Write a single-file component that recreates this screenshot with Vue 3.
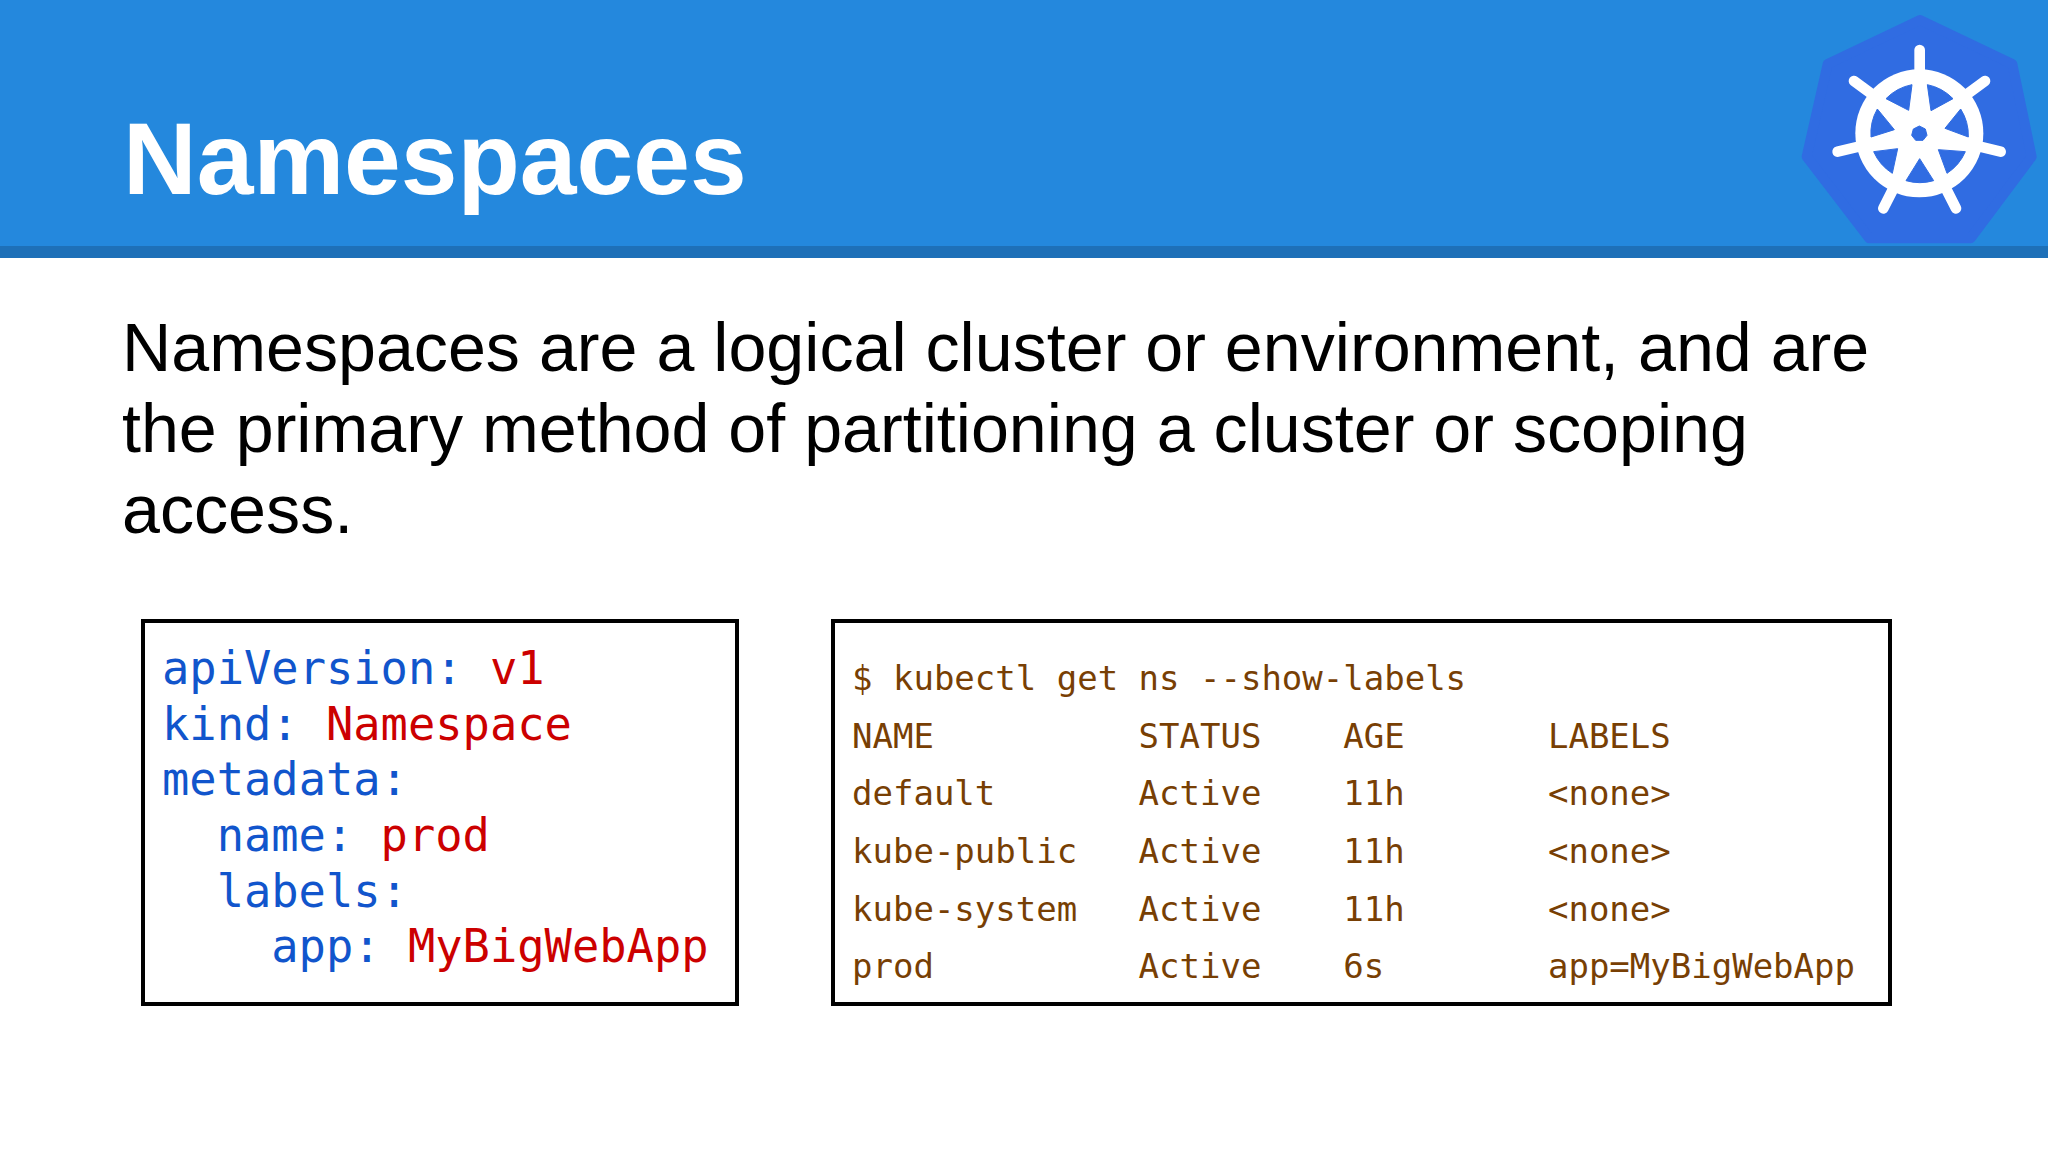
<script setup>
const yaml = [
  { indent: 0, key: 'apiVersion:', value: 'v1' },
  { indent: 0, key: 'kind:', value: 'Namespace' },
  { indent: 0, key: 'metadata:', value: '' },
  { indent: 2, key: 'name:', value: 'prod' },
  { indent: 2, key: 'labels:', value: '' },
  { indent: 4, key: 'app:', value: 'MyBigWebApp' },
]
const rows = [
  ['NAME', 'STATUS', 'AGE', 'LABELS'],
  ['default', 'Active', '11h', '<none>'],
  ['kube-public', 'Active', '11h', '<none>'],
  ['kube-system', 'Active', '11h', '<none>'],
  ['prod', 'Active', '6s', 'app=MyBigWebApp'],
]
const spokes = [
  [479, 150, 479, 215],
  [675, 243, 625, 280],
  [722, 455, 660, 440],
  [588, 625, 560, 570],
  [370, 625, 398, 570],
  [233, 455, 296, 440],
  [282, 243, 332, 280],
]
const windows = [
  'M378 296A148 148 0 0 1 456 254L446 331Z',
  'M502 254A148 148 0 0 1 579 296L513 332Z',
  'M602 327A148 148 0 0 1 625 411L555 385Z',
  'M616 455A148 148 0 0 1 561 520L535 449Z',
  'M521 542A148 148 0 0 1 438 542L479 476Z',
  'M397 520A148 148 0 0 1 341 455L413 446Z',
  'M333 411A148 148 0 0 1 352 327L403 389Z',
]
</script>

<template>
  <div class="slide">
    <header class="banner">
      <h1 class="title">Namespaces</h1>
      <svg class="logo" viewBox="0 0 864 810" aria-hidden="true">
        <polygon class="hept" points="480,60 757,192 815,470 632,715 328,715 140,470 203,192" />
        <circle class="white" cx="478" cy="400" r="192" />
        <line v-for="(s, i) in spokes" :key="i" class="spoke" :x1="s[0]" :y1="s[1]" :x2="s[2]" :y2="s[3]" />
        <path v-for="(d, i) in windows" :key="'w' + i" class="window" :d="d" />
        <polygon class="hub" points="478,378 496,387 501,406 489,421 467,421 455,406 460,387" />
      </svg>
    </header>
    <main class="content">
      <p class="lead">Namespaces are a logical cluster or environment, and are the primary method of partitioning a cluster or scoping access.</p>
      <section class="boxes">
        <div class="box yaml">
          <div v-for="line in yaml" :key="line.key" class="yaml-line" :style="{ paddingLeft: line.indent + 'ch' }">
            <span class="key">{{ line.key }}</span><span v-if="line.value" class="value">{{ ' ' + line.value }}</span>
          </div>
        </div>
        <div class="box term">
          <div class="term-line">$ kubectl get ns --show-labels</div>
          <div v-for="row in rows" :key="row[0]" class="term-row">
            <span v-for="cell in row" :key="cell">{{ cell }}</span>
          </div>
        </div>
      </section>
    </main>
  </div>
</template>

<style scoped>
.slide {
  width: 2048px;
  height: 1152px;
  overflow: hidden;
  background: #fff;
  font-family: "Liberation Sans", Arial, sans-serif;
  color: #000;
}
.banner {
  position: relative;
  box-sizing: border-box;
  height: 258px;
  background: #2488dd;
  border-bottom: 12px solid #1e70b8;
  display: flex;
  align-items: flex-end;
  padding: 0 0 26px 123px;
}
.title {
  margin: 0;
  font-size: 102px;
  font-weight: 700;
  line-height: 1.2;
  color: #fff;
}
.logo {
  position: absolute;
  left: 1760px;
  top: 0;
  width: 288px;
  height: 270px;
}
.hept {
  fill: #306ce2;
  stroke: #306ce2;
  stroke-width: 30;
  stroke-linejoin: round;
}
.white { fill: #fff; }
.spoke {
  stroke: #fff;
  stroke-width: 32;
  stroke-linecap: round;
}
.window, .hub {
  fill: #306ce2;
  stroke: #306ce2;
  stroke-width: 3;
  stroke-linejoin: round;
}
.content {
  padding: 0 0 0 122px;
}
.lead {
  margin: 49px 0 0;
  width: 1790px;
  font-size: 68.2px;
  line-height: 81px;
}
.boxes {
  display: flex;
  gap: 92px;
  margin: 69px 0 0 19px;
}
.box {
  box-sizing: border-box;
  height: 387px;
  border: 4px solid #000;
  display: flex;
  flex-direction: column;
  justify-content: center;
  font-family: "DejaVu Sans Mono", "Liberation Mono", monospace;
  white-space: pre;
}
.yaml {
  width: 598px;
  padding: 0 0 9px 17px;
  font-size: 45.4px;
  line-height: 55.6px;
  color: #1155cc;
}
.value { color: #cc0000; }
.term {
  width: 1061px;
  padding: 21px 0 0 17px;
  font-size: 34px;
  line-height: 57.6px;
  color: #783f04;
}
.term-row {
  display: grid;
  grid-template-columns: 14ch 10ch 10ch 1fr;
}
</style>
